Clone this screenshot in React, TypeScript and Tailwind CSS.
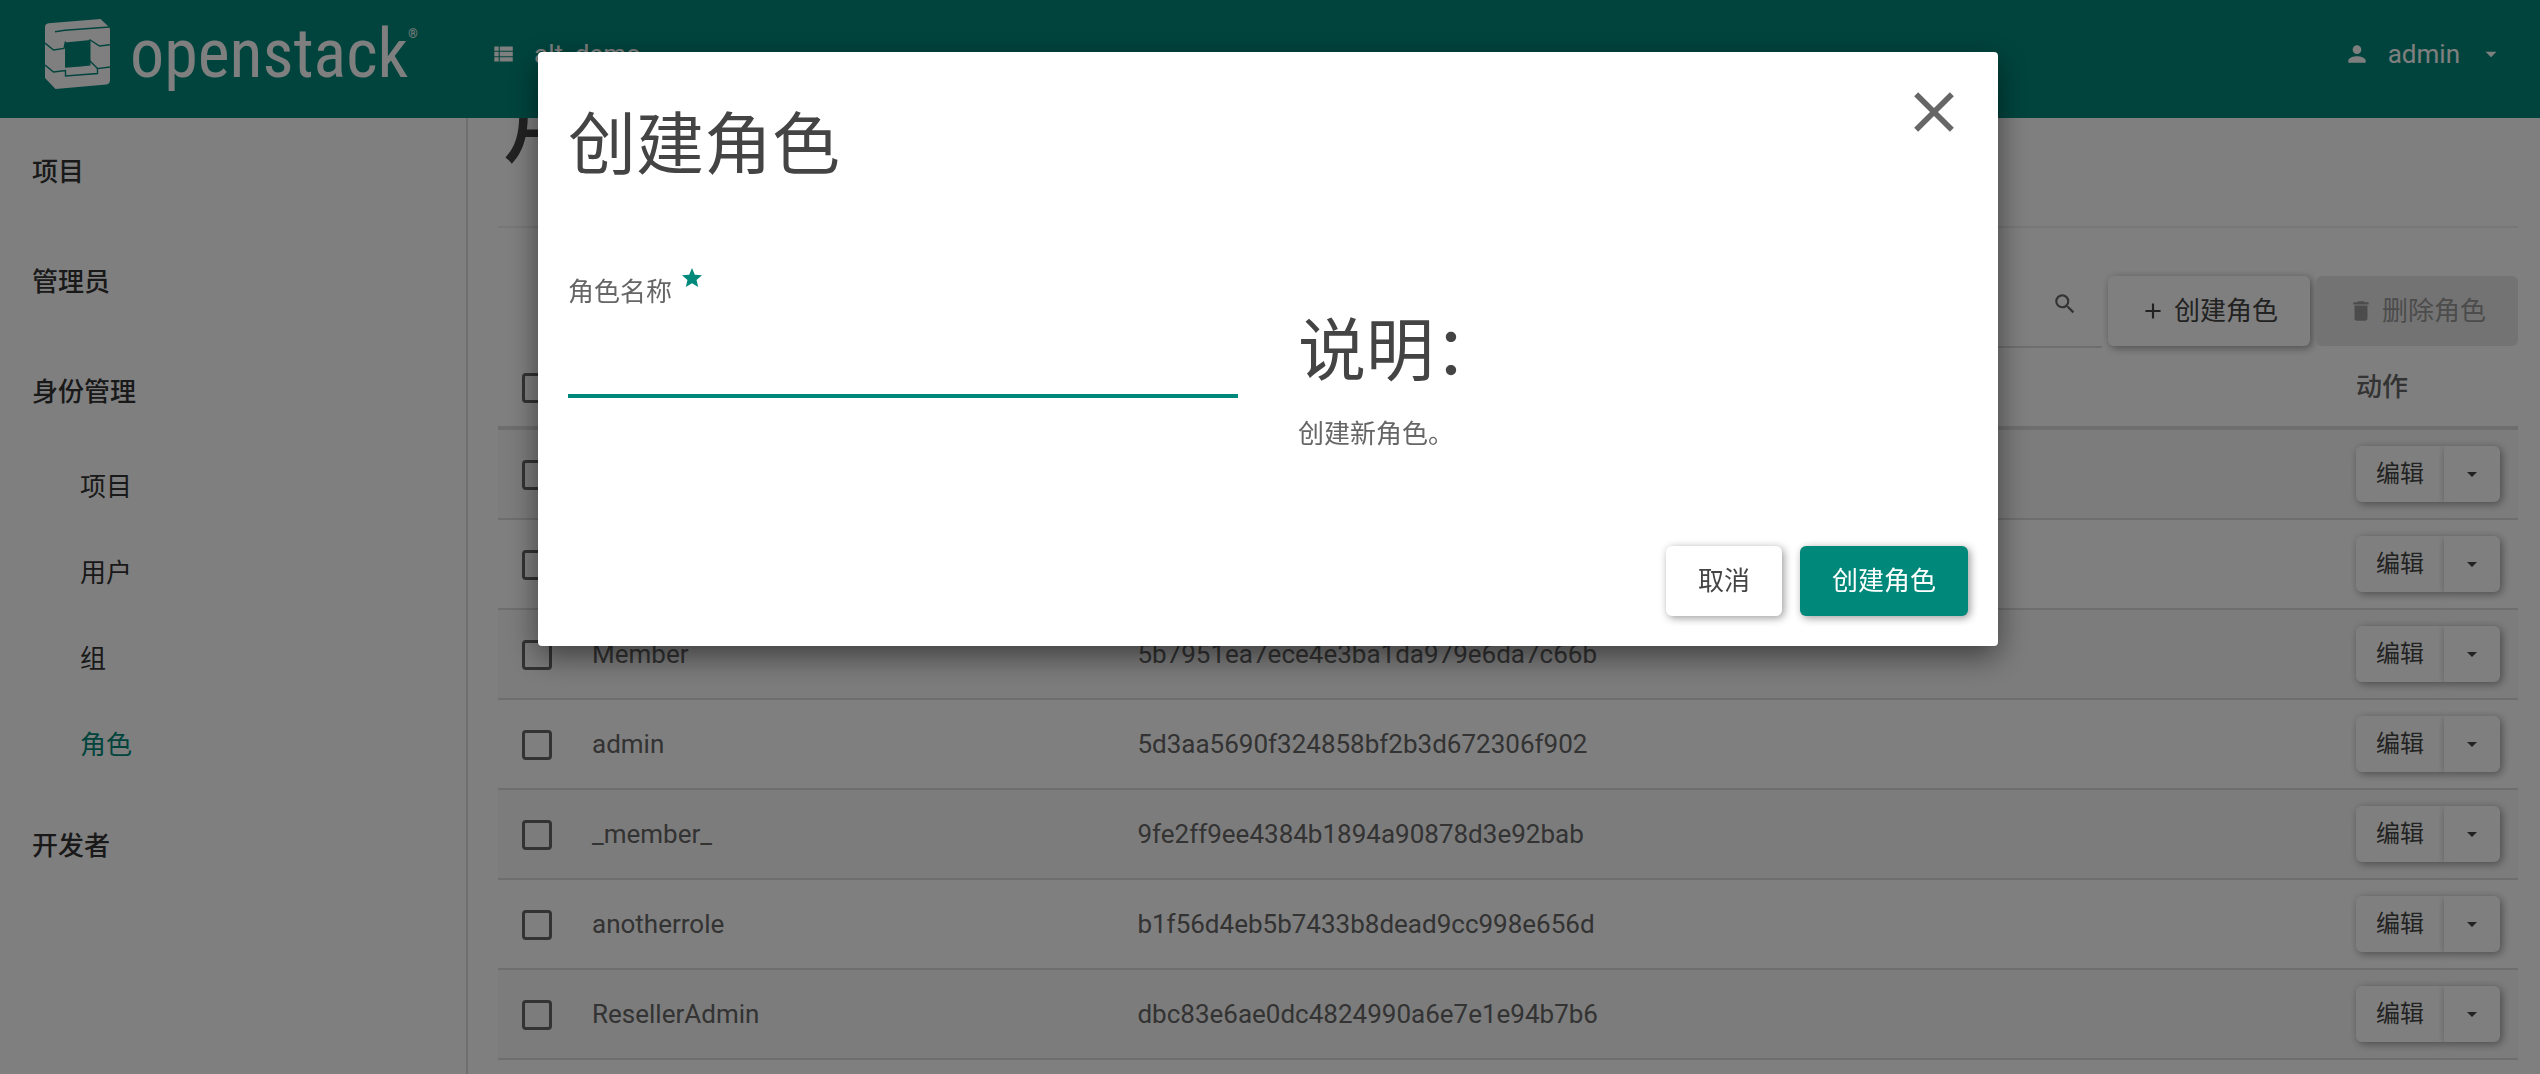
import React from "react";

const ICONS = {
  viewList:
    "M4 14h4v-4H4v4zm0 5h4v-4H4v4zM4 9h4V5H4v4zm5 5h12v-4H9v4zm0 5h12v-4H9v4zM9 5v4h12V5H9z",
  person:
    "M12 12c2.21 0 4-1.79 4-4s-1.79-4-4-4-4 1.79-4 4 1.79 4 4 4zm0 2c-2.67 0-8 1.34-8 4v2h16v-2c0-2.66-5.33-4-8-4z",
  caret: "M7 10l5 5 5-5z",
  search:
    "M15.5 14h-.79l-.28-.27A6.471 6.471 0 0 0 16 9.5 6.5 6.5 0 1 0 9.5 16c1.61 0 3.09-.59 4.23-1.57l.27.28v.79l5 4.99L20.49 19l-4.99-5zm-6 0C7.01 14 5 11.99 5 9.5S7.01 5 9.5 5 14 7.01 14 9.5 11.99 14 9.5 14z",
  add: "M19 13h-6v6h-2v-6H5v-2h6V5h2v6h6v2z",
  trash: "M6 19c0 1.1.9 2 2 2h8c1.1 0 2-.9 2-2V7H6v12zM19 4h-3.5l-1-1h-5l-1 1H5v2h14V4z",
  close:
    "M19 6.41L17.59 5 12 10.59 6.41 5 5 6.41 10.59 12 5 17.59 6.41 19 12 13.41 17.59 19 19 17.59 13.41 12z",
  star: "M12 17.27L18.18 21l-1.64-7.03L22 9.24l-7.19-.61L12 2 9.19 8.63 2 9.24l5.46 4.73L5.82 21z",
};

function Icon({ name, className }: { name: keyof typeof ICONS; className: string }) {
  return (
    <svg viewBox="0 0 24 24" fill="currentColor" aria-hidden="true" className={className}>
      <path d={ICONS[name]} />
    </svg>
  );
}

function Logo() {
  return (
    <a href="#home" aria-label="openstack" className="flex items-center gap-5 text-white">
      <svg viewBox="0 0 65 70" fill="currentColor" aria-hidden="true" className="h-[70px] w-[65px]">
        <path
          fillRule="evenodd"
          d="M0 8Q0 4.700 3.500 4.300L55.500 0L64 8Q65 9 65 11V61Q65 65 61.500 65.400L10.500 70L0 59ZM20 23.500V48.800L36 47.500L45.500 46.500V21Z"
        />
        <g fill="none" stroke="#00897b" strokeWidth="1.400">
          <path d="M10 12.800L20 11.300L64.500 8" />
          <path d="M0 24L8.500 31L19 29.500L20.500 22.500" />
          <path d="M44.500 20.500L54.500 27L65 25.800" />
          <path d="M0 46L8.500 53L20.500 51.500V57L52.500 54.500V49.500L65 48" />
          <path d="M44.500 41.500L52.500 49.500" />
        </g>
      </svg>
      <span className="flex items-start">
        <span className="font-['Roboto_Condensed',Roboto,sans-serif] text-[68px] leading-[76px]">
          openstack
        </span>
        <span className="text-[12px]">®</span>
      </span>
    </a>
  );
}

function Header() {
  return (
    <header className="flex h-[118px] shrink-0 items-start bg-[#00897b] pr-9 pl-[45px] text-[26px] text-white">
      <div className="flex h-[108px] w-[445px] items-center">
        <Logo />
      </div>
      <button type="button" className="flex h-[108px] items-center gap-[18px]">
        <Icon name="viewList" className="size-[26px]" />
        alt_demo
      </button>
      <button type="button" className="ml-auto flex h-[108px] items-center gap-[18px]">
        <Icon name="person" className="size-[26px]" />
        admin
        <Icon name="caret" className="size-[26px]" />
      </button>
    </header>
  );
}

const IDENTITY = ["项目", "用户", "组", "角色"];

function Sidebar() {
  const top = "flex h-[104px] items-center pl-8 font-medium text-[#333]";
  return (
    <nav className="w-[468px] shrink-0 border-r-2 border-[#ddd] pt-0.5">
      <ul className="flex flex-col gap-1.5">
        <li>
          <a href="#project" className={top}>项目</a>
        </li>
        <li>
          <a href="#admin" className={top}>管理员</a>
        </li>
        <li>
          <a href="#identity" className={top}>身份管理</a>
          <ul>
            {IDENTITY.map((item) => (
              <li key={item}>
                <a
                  href={`#${item}`}
                  className={
                    item === "角色"
                      ? "flex h-[86px] items-center pl-20 text-[#00897b]"
                      : "flex h-[86px] items-center pl-20 text-[#333]"
                  }
                >
                  {item}
                </a>
              </li>
            ))}
          </ul>
        </li>
        <li>
          <a href="#developer" className={top}>开发者</a>
        </li>
      </ul>
    </nav>
  );
}

const ROLES = [
  { name: "service", id: "1f0d2c6a7be94d5b8e3c9a4f6072d1b3" },
  { name: "anotherrole2", id: "3c58e1b9d7a6402f9b0e4d2c8f7a6153" },
  { name: "Member", id: "5b7951ea7ece4e3ba1da979e6da7c66b" },
  { name: "admin", id: "5d3aa5690f324858bf2b3d672306f902" },
  { name: "_member_", id: "9fe2ff9ee4384b1894a90878d3e92bab" },
  { name: "anotherrole", id: "b1f56d4eb5b7433b8dead9cc998e656d" },
  { name: "ResellerAdmin", id: "dbc83e6ae0dc4824990a6e7e1e94b7b6" },
];

function CheckBox({ label }: { label: string }) {
  return (
    <input
      type="checkbox"
      aria-label={label}
      className="block size-[30px] appearance-none rounded-[4px] border-[3px] border-[#666]"
    />
  );
}

function RolesTable() {
  return (
    <table className="w-full table-fixed border-separate border-spacing-0 text-left">
      <thead>
        <tr className="h-[82px] [&>th]:border-b-4 [&>th]:border-[#ddd]">
          <th className="w-[76px] pt-0.5 pl-6">
            <CheckBox label="全选" />
          </th>
          <th className="w-[27%] px-[18px] font-medium">角色名称</th>
          <th className="px-[18px] font-medium">角色ID</th>
          <th className="w-[180px] px-[18px] font-medium">动作</th>
        </tr>
      </thead>
      <tbody>
        {ROLES.map((role) => (
          <tr key={role.id} className="odd:bg-[#f9f9f9] [&>td]:border-b-2 [&>td]:border-[#ddd]">
            <td className="pt-0.5 pl-6">
              <CheckBox label={role.name} />
            </td>
            <td className="px-[18px]">{role.name}</td>
            <td className="px-[18px]">{role.id}</td>
            <td className="px-[18px] py-4">
              <div className="flex text-2xl text-[#444]">
                <button
                  type="button"
                  className="h-14 w-[88px] rounded-l-[6px] bg-white text-center shadow-[2px_2px_8px_rgba(0,0,0,0.4)]"
                >
                  编辑
                </button>
                <button
                  type="button"
                  aria-label="更多"
                  className="flex h-14 w-14 items-center justify-center rounded-r-[6px] bg-white shadow-[2px_2px_8px_rgba(0,0,0,0.4)]"
                >
                  <Icon name="caret" className="size-6" />
                </button>
              </div>
            </td>
          </tr>
        ))}
      </tbody>
    </table>
  );
}

function Toolbar() {
  return (
    <div className="flex h-[72px] items-start justify-end gap-1.5">
      <div className="flex h-[72px] w-[520px] border-b-2 border-[#ddd]">
        <input type="text" aria-label="过滤" className="h-14 min-w-0 flex-1 outline-none" />
        <button type="button" aria-label="搜索" className="flex h-14 items-center pr-6">
          <Icon name="search" className="size-[26px]" />
        </button>
      </div>
      <button
        type="button"
        className="flex h-[70px] items-center gap-2 rounded-[6px] bg-white px-8 text-[#444] shadow-[2px_2px_8px_rgba(0,0,0,0.4)]"
      >
        <Icon name="add" className="size-[26px]" />
        创建角色
      </button>
      <button
        type="button"
        disabled
        className="flex h-[70px] items-center gap-2 rounded-[6px] bg-[#e6e6e6] px-8 text-[#999]"
      >
        <Icon name="trash" className="size-[26px]" />
        删除角色
      </button>
    </div>
  );
}

function CreateRoleDialog() {
  return (
    <div className="fixed inset-0 flex items-start justify-center bg-black/50 pt-[52px] pr-1">
      <form
        role="dialog"
        aria-labelledby="dialog-title"
        className="w-[1460px] max-w-full rounded-[4px] bg-white p-[30px] text-[#666] shadow-[0_10px_30px_rgba(0,0,0,0.5)]"
      >
        <div className="flex items-start justify-between">
          <h2 id="dialog-title" className="pt-[26px] text-[68px] leading-[76px] text-[#444]">
            创建角色
          </h2>
          <button type="button" aria-label="关闭" className="-mt-1">
            <Icon name="close" className="size-[68px]" />
          </button>
        </div>
        <div className="grid grid-cols-2 gap-[60px] pt-[88px]">
          <div>
            <label htmlFor="role-name" className="flex gap-2 pt-0.5 leading-9">
              角色名称
              <Icon name="star" className="-mt-2 size-6 text-[#00897b]" />
            </label>
            <input
              id="role-name"
              type="text"
              className="mt-3.5 h-[74px] w-full border-b-4 border-[#00897b] outline-none"
            />
          </div>
          <div className="pt-[42px]">
            <h3 className="text-[68px] leading-[76px] text-[#444]">说明：</h3>
            <p className="pt-[26px] leading-9">创建新角色。</p>
          </div>
        </div>
        <div className="flex justify-end gap-[18px] pt-[94px]">
          <button
            type="button"
            className="h-[70px] rounded-[6px] bg-white px-8 text-[#444] shadow-[2px_2px_8px_rgba(0,0,0,0.4)]"
          >
            取消
          </button>
          <button
            type="submit"
            className="h-[70px] rounded-[6px] bg-[#00897b] px-8 text-white shadow-[2px_2px_8px_rgba(0,0,0,0.4)]"
          >
            创建角色
          </button>
        </div>
      </form>
    </div>
  );
}

export default function App() {
  return (
    <div
      lang="zh-CN"
      className="flex h-screen flex-col overflow-hidden bg-white font-[Roboto,'Noto_Sans_CJK_SC',sans-serif] text-[26px] leading-9 text-[#666]"
    >
      <Header />
      <div className="flex min-h-0 flex-1">
        <Sidebar />
        <main className="min-w-0 flex-1 overflow-hidden pr-[22px] pl-[30px]">
          <h1 className="-mt-16 text-[112px] leading-[124px] text-[#444]">角色</h1>
          <hr className="mt-12 mb-12 border-t-2 border-[#eee]" />
          <Toolbar />
          <RolesTable />
        </main>
      </div>
      <CreateRoleDialog />
    </div>
  );
}
